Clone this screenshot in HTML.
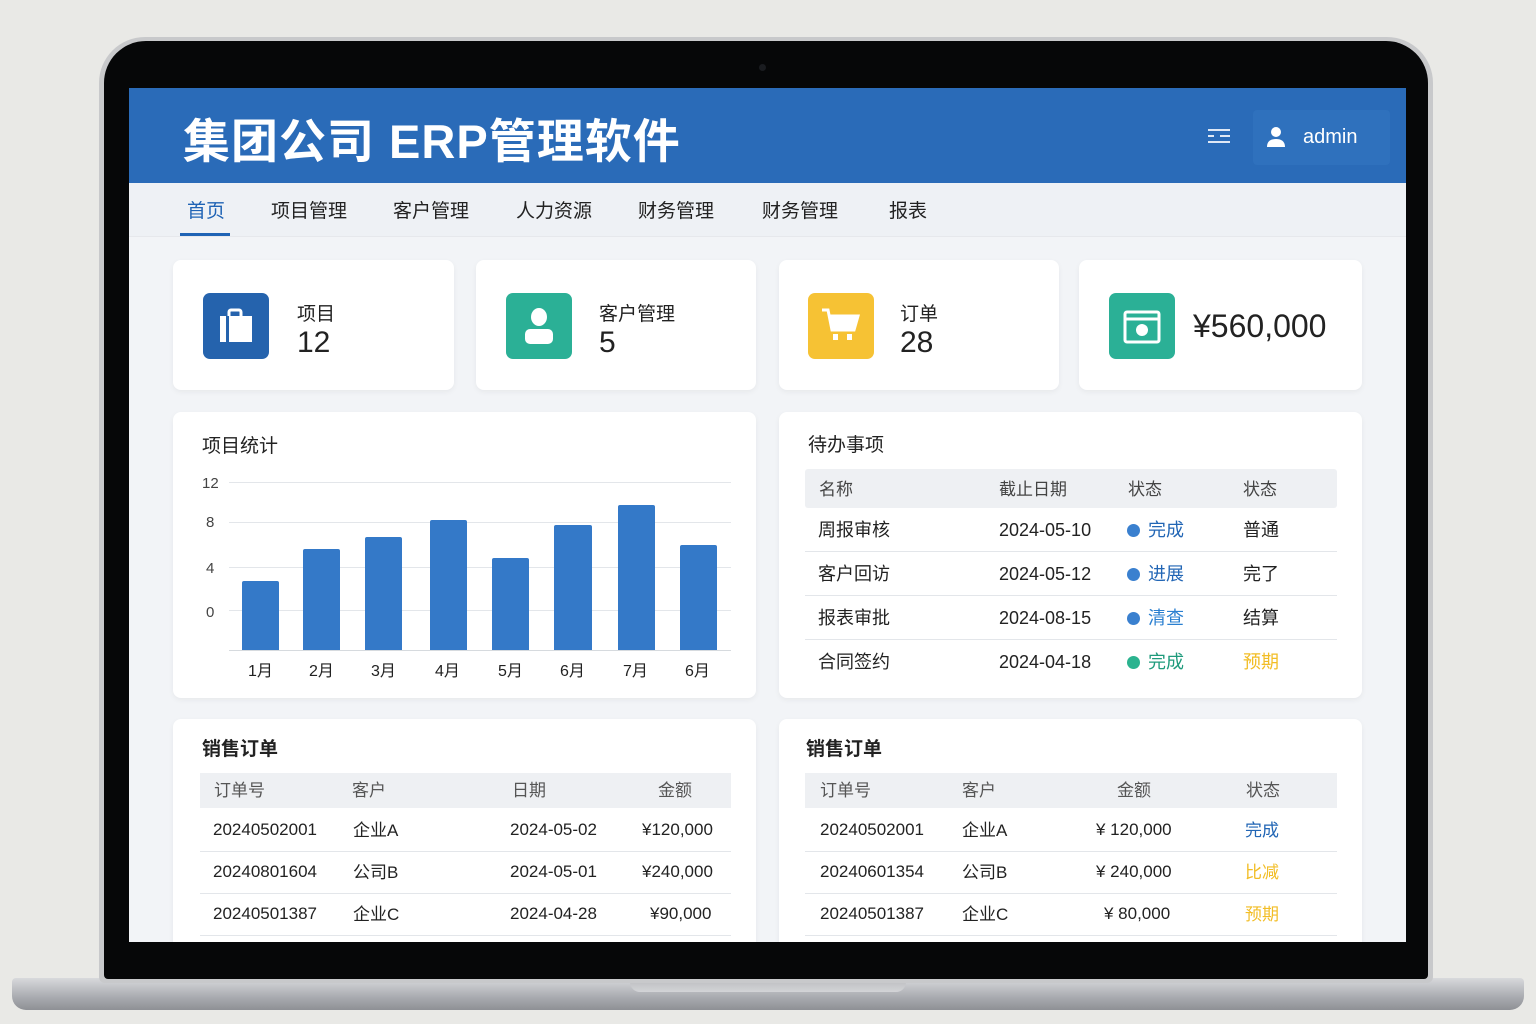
<!DOCTYPE html>
<html><head><meta charset="utf-8"><style>
*{margin:0;padding:0;box-sizing:border-box}
body{width:1536px;height:1024px;background:#e9e9e6;position:relative;overflow:hidden;font-family:"Liberation Sans","Noto Sans CJK SC",sans-serif;color:#222}
.a{position:absolute}
.card{position:absolute;background:#fff;border-radius:8px;box-shadow:0 2px 6px rgba(0,0,0,.05)}
.t{position:absolute;white-space:nowrap}
.c{margin-top:-4px}
.ic{position:absolute;width:66px;height:66px;border-radius:7px}
.row{position:absolute;height:1px;background:#e3e6ea}
</style></head><body>
<div class="a" style="left:12px;top:978px;width:1512px;height:32px;background:linear-gradient(#d8d9dc,#a9abb0 60%,#8e9095);border-radius:4px 4px 14px 14px"></div>
<div class="a" style="left:630px;top:978px;width:276px;height:14px;background:linear-gradient(#b9babd,#d3d4d7);border-radius:0 0 10px 10px"></div>
<div class="a" style="left:99px;top:37px;width:1334px;height:946px;background:#c8c9cb;border-radius:46px 46px 6px 6px"></div>
<div class="a" style="left:104px;top:41px;width:1324px;height:938px;background:#060708;border-radius:42px 42px 4px 4px"></div>
<div class="a" style="left:759px;top:64px;width:7px;height:7px;border-radius:50%;background:#1a1c20"></div>
<div class="a" style="left:129px;top:88px;width:1277px;height:854px;background:#f2f4f7;overflow:hidden">
 <div class="a" style="left:0;top:0;width:1277px;height:95px;background:#2a6bb8"></div>
 <div class="t" style="left:54px;top:15px;font-size:47px;font-weight:bold;color:#fff;letter-spacing:1px">集团公司 ERP管理软件</div>
 <svg class="a" style="left:1078px;top:39px" width="24" height="18" viewBox="0 0 24 18"><g stroke="#dfe8f5" stroke-width="2"><line x1="1" y1="3" x2="23" y2="3"/><line x1="1" y1="9" x2="23" y2="9"/><line x1="1" y1="15" x2="23" y2="15"/></g><rect x="7" y="6" width="6" height="6" fill="#2a6bb8"/></svg>
 <div class="a" style="left:1124px;top:22px;width:137px;height:55px;background:#2f71bd;border-radius:4px"></div>
 <svg class="a" style="left:1137px;top:38px" width="20" height="22" viewBox="0 0 20 22"><circle cx="10" cy="6" r="5" fill="#fff"/><path d="M1 21c0-6 4-8 9-8s9 2 9 8z" fill="#fff"/></svg>
 <div class="t" style="left:1174px;top:38px;font-size:20px;color:#fff">admin</div>
 <div class="a" style="left:0;top:95px;width:1277px;height:54px;background:#eef1f5;border-bottom:1px solid #e6e8ec"></div>
 <div class="t" style="left:58px;top:108px;font-size:19px;color:#1f63b5">首页</div>
 <div class="a" style="left:51px;top:145px;width:50px;height:3px;background:#1f63b5"></div>
 <div class="t" style="left:142px;top:108px;font-size:19px">项目管理</div>
 <div class="t" style="left:264px;top:108px;font-size:19px">客户管理</div>
 <div class="t" style="left:387px;top:108px;font-size:19px">人力资源</div>
 <div class="t" style="left:509px;top:108px;font-size:19px">财务管理</div>
 <div class="t" style="left:633px;top:108px;font-size:19px">财务管理</div>
 <div class="t" style="left:760px;top:108px;font-size:19px">报表</div>
 <div class="card" style="left:44px;top:172px;width:281px;height:130px"></div>
 <div class="card" style="left:347px;top:172px;width:280px;height:130px"></div>
 <div class="card" style="left:650px;top:172px;width:280px;height:130px"></div>
 <div class="card" style="left:950px;top:172px;width:283px;height:130px"></div>
 <div class="ic" style="left:74px;top:205px;background:#2563ad"></div>
 <svg class="a" style="left:89px;top:219px" width="36" height="38" viewBox="0 0 36 38"><rect x="2" y="9" width="32" height="26" fill="#fff"/><rect x="11" y="3" width="12" height="8" rx="2" fill="none" stroke="#fff" stroke-width="3"/><rect x="8" y="9" width="3" height="26" fill="#2563ad"/></svg>
 <div class="t" style="left:168px;top:211px;font-size:19px">项目</div>
 <div class="t" style="left:168px;top:238px;font-size:30px">12</div>
 <div class="ic" style="left:377px;top:205px;background:#2bb096"></div>
 <svg class="a" style="left:393px;top:218px" width="34" height="40" viewBox="0 0 34 40"><ellipse cx="17" cy="11" rx="8" ry="9" fill="#fff"/><rect x="3" y="23" width="28" height="15" rx="5" fill="#fff"/></svg>
 <div class="t" style="left:470px;top:211px;font-size:19px">客户管理</div>
 <div class="t" style="left:470px;top:238px;font-size:30px">5</div>
 <div class="ic" style="left:679px;top:205px;background:#f6c234"></div>
 <svg class="a" style="left:690px;top:218px" width="44" height="40" viewBox="0 0 44 40"><path d="M3 4h6l4 20h22l4-14H11" fill="none" stroke="#fff" stroke-width="3"/><path d="M11 10h28l-4 14H13z" fill="#fff"/><rect x="14" y="28" width="5" height="6" fill="#fff"/><rect x="28" y="28" width="5" height="6" fill="#fff"/></svg>
 <div class="t" style="left:771px;top:211px;font-size:19px">订单</div>
 <div class="t" style="left:771px;top:238px;font-size:30px">28</div>
 <div class="ic" style="left:980px;top:205px;background:#2bb096"></div>
 <svg class="a" style="left:993px;top:218px" width="40" height="40" viewBox="0 0 40 40"><rect x="3" y="6" width="34" height="30" rx="2" fill="none" stroke="#fff" stroke-width="3"/><line x1="3" y1="13" x2="37" y2="13" stroke="#fff" stroke-width="3"/><circle cx="20" cy="24" r="6" fill="#fff"/></svg>
 <div class="t" style="left:1064px;top:220px;font-size:32px;font-weight:500">¥560,000</div>
 <div class="card" style="left:44px;top:324px;width:583px;height:286px"></div>
 <div class="t" style="left:73px;top:343px;font-size:19px">项目统计</div>
 <div class="t" style="left:73px;top:387px;font-size:15px;color:#444">12</div>
 <div class="t" style="left:77px;top:426px;font-size:15px;color:#444">8</div>
 <div class="t" style="left:77px;top:472px;font-size:15px;color:#444">4</div>
 <div class="t" style="left:77px;top:516px;font-size:15px;color:#444">0</div>
 <div class="row" style="left:100px;top:394px;width:502px"></div>
 <div class="row" style="left:100px;top:434px;width:502px"></div>
 <div class="row" style="left:100px;top:479px;width:502px"></div>
 <div class="row" style="left:100px;top:522px;width:502px"></div>
 <div class="row" style="left:100px;top:562px;width:502px;background:#d6dade"></div>
 <div class="a" style="left:113px;top:493px;width:37px;height:69px;background:#3479c8;border-radius:2px 2px 0 0"></div>
 <div class="a" style="left:174px;top:461px;width:37px;height:101px;background:#3479c8;border-radius:2px 2px 0 0"></div>
 <div class="a" style="left:236px;top:449px;width:37px;height:113px;background:#3479c8;border-radius:2px 2px 0 0"></div>
 <div class="a" style="left:301px;top:432px;width:37px;height:130px;background:#3479c8;border-radius:2px 2px 0 0"></div>
 <div class="a" style="left:363px;top:470px;width:37px;height:92px;background:#3479c8;border-radius:2px 2px 0 0"></div>
 <div class="a" style="left:425px;top:437px;width:38px;height:125px;background:#3479c8;border-radius:2px 2px 0 0"></div>
 <div class="a" style="left:489px;top:417px;width:37px;height:145px;background:#3479c8;border-radius:2px 2px 0 0"></div>
 <div class="a" style="left:551px;top:457px;width:37px;height:105px;background:#3479c8;border-radius:2px 2px 0 0"></div>
 <div class="t" style="left:119px;top:569px;font-size:16px">1月</div>
 <div class="t" style="left:180px;top:569px;font-size:16px">2月</div>
 <div class="t" style="left:242px;top:569px;font-size:16px">3月</div>
 <div class="t" style="left:306px;top:569px;font-size:16px">4月</div>
 <div class="t" style="left:369px;top:569px;font-size:16px">5月</div>
 <div class="t" style="left:431px;top:569px;font-size:16px">6月</div>
 <div class="t" style="left:494px;top:569px;font-size:16px">7月</div>
 <div class="t" style="left:556px;top:569px;font-size:16px">6月</div>
 <div class="card" style="left:650px;top:324px;width:583px;height:286px"></div>
 <div class="t" style="left:679px;top:342px;font-size:19px">待办事项</div>
 <div class="a" style="left:676px;top:381px;width:532px;height:39px;background:#eef0f3;border-radius:3px"></div>
 <div class="t c" style="left:690px;top:391px;font-size:17px;color:#444">名称</div>
 <div class="t c" style="left:870px;top:391px;font-size:17px;color:#444">截止日期</div>
 <div class="t c" style="left:999px;top:391px;font-size:17px;color:#444">状态</div>
 <div class="t c" style="left:1114px;top:391px;font-size:17px;color:#444">状态</div>
 <div class="row" style="left:676px;top:463px;width:532px"></div>
 <div class="row" style="left:676px;top:507px;width:532px"></div>
 <div class="row" style="left:676px;top:551px;width:532px"></div>
 <div class="t c" style="left:689px;top:432px;font-size:18px">周报审核</div>
 <div class="t" style="left:870px;top:432px;font-size:18px">2024-05-10</div>
 <div class="a" style="left:998px;top:436px;width:13px;height:13px;border-radius:50%;background:#3a80cf"></div>
 <div class="t c" style="left:1019px;top:432px;font-size:18px;color:#2266b5">完成</div>
 <div class="t c" style="left:1114px;top:432px;font-size:18px">普通</div>
 <div class="t c" style="left:689px;top:476px;font-size:18px">客户回访</div>
 <div class="t" style="left:870px;top:476px;font-size:18px">2024-05-12</div>
 <div class="a" style="left:998px;top:480px;width:13px;height:13px;border-radius:50%;background:#3a80cf"></div>
 <div class="t c" style="left:1019px;top:476px;font-size:18px;color:#2266b5">进展</div>
 <div class="t c" style="left:1114px;top:476px;font-size:18px">完了</div>
 <div class="t c" style="left:689px;top:520px;font-size:18px">报表审批</div>
 <div class="t" style="left:870px;top:520px;font-size:18px">2024-08-15</div>
 <div class="a" style="left:998px;top:524px;width:13px;height:13px;border-radius:50%;background:#3a80cf"></div>
 <div class="t c" style="left:1019px;top:520px;font-size:18px;color:#2a7fd0">清查</div>
 <div class="t c" style="left:1114px;top:520px;font-size:18px">结算</div>
 <div class="t c" style="left:689px;top:564px;font-size:18px">合同签约</div>
 <div class="t" style="left:870px;top:564px;font-size:18px">2024-04-18</div>
 <div class="a" style="left:998px;top:568px;width:13px;height:13px;border-radius:50%;background:#2bb38f"></div>
 <div class="t c" style="left:1019px;top:564px;font-size:18px;color:#1f9b7c">完成</div>
 <div class="t c" style="left:1114px;top:564px;font-size:18px;color:#f2bd25">预期</div>
 <div class="card" style="left:44px;top:631px;width:583px;height:260px"></div>
 <div class="t" style="left:73px;top:646px;font-size:19px;font-weight:bold">销售订单</div>
 <div class="a" style="left:71px;top:685px;width:531px;height:35px;background:#eef0f3"></div>
 <div class="t c" style="left:85px;top:692px;font-size:17px;color:#555">订单号</div>
 <div class="t c" style="left:223px;top:692px;font-size:17px;color:#555">客户</div>
 <div class="t c" style="left:383px;top:692px;font-size:17px;color:#555">日期</div>
 <div class="t c" style="left:529px;top:692px;font-size:17px;color:#555">金额</div>
 <div class="row" style="left:71px;top:763px;width:531px"></div>
 <div class="row" style="left:71px;top:805px;width:531px"></div>
 <div class="row" style="left:71px;top:847px;width:531px"></div>
 <div class="t" style="left:84px;top:732px;font-size:17px">20240502001</div>
 <div class="t c" style="left:224px;top:732px;font-size:17px">企业A</div>
 <div class="t" style="left:381px;top:732px;font-size:17px">2024-05-02</div>
 <div class="t" style="left:513px;top:732px;font-size:17px">¥120,000</div>
 <div class="t" style="left:84px;top:774px;font-size:17px">20240801604</div>
 <div class="t c" style="left:224px;top:774px;font-size:17px">公司B</div>
 <div class="t" style="left:381px;top:774px;font-size:17px">2024-05-01</div>
 <div class="t" style="left:513px;top:774px;font-size:17px">¥240,000</div>
 <div class="t" style="left:84px;top:816px;font-size:17px">20240501387</div>
 <div class="t c" style="left:224px;top:816px;font-size:17px">企业C</div>
 <div class="t" style="left:381px;top:816px;font-size:17px">2024-04-28</div>
 <div class="t" style="left:521px;top:816px;font-size:17px">¥90,000</div>
 <div class="card" style="left:650px;top:631px;width:583px;height:260px"></div>
 <div class="t" style="left:677px;top:646px;font-size:19px;font-weight:bold">销售订单</div>
 <div class="a" style="left:676px;top:685px;width:532px;height:35px;background:#eef0f3"></div>
 <div class="t c" style="left:691px;top:692px;font-size:17px;color:#555">订单号</div>
 <div class="t c" style="left:833px;top:692px;font-size:17px;color:#555">客户</div>
 <div class="t c" style="left:988px;top:692px;font-size:17px;color:#555">金额</div>
 <div class="t c" style="left:1117px;top:692px;font-size:17px;color:#555">状态</div>
 <div class="row" style="left:676px;top:763px;width:532px"></div>
 <div class="row" style="left:676px;top:805px;width:532px"></div>
 <div class="row" style="left:676px;top:847px;width:532px"></div>
 <div class="t" style="left:691px;top:732px;font-size:17px">20240502001</div>
 <div class="t c" style="left:833px;top:732px;font-size:17px">企业A</div>
 <div class="t" style="left:967px;top:732px;font-size:17px">¥ 120,000</div>
 <div class="t c" style="left:1116px;top:732px;font-size:17px;color:#2266b5">完成</div>
 <div class="t" style="left:691px;top:774px;font-size:17px">20240601354</div>
 <div class="t c" style="left:833px;top:774px;font-size:17px">公司B</div>
 <div class="t" style="left:967px;top:774px;font-size:17px">¥ 240,000</div>
 <div class="t c" style="left:1116px;top:774px;font-size:17px;color:#f2bd25">比减</div>
 <div class="t" style="left:691px;top:816px;font-size:17px">20240501387</div>
 <div class="t c" style="left:833px;top:816px;font-size:17px">企业C</div>
 <div class="t" style="left:975px;top:816px;font-size:17px">¥ 80,000</div>
 <div class="t c" style="left:1116px;top:816px;font-size:17px;color:#f2bd25">预期</div>
</div>
</body></html>
